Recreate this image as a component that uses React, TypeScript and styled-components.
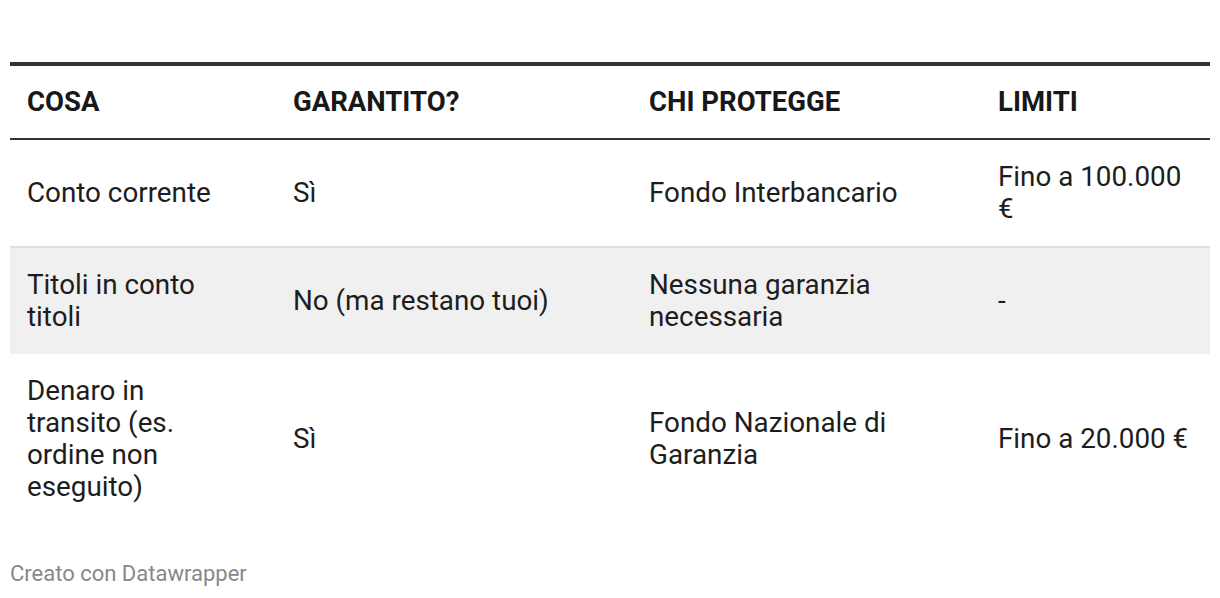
import styled, { createGlobalStyle } from "styled-components";

type Row = {
  cosa: string;
  garantito: string;
  chi: string;
  limiti: string;
};

const columns = ["Cosa", "Garantito?", "Chi protegge", "Limiti"];
const widths = [266, 356, 349, 229];

const rows: Row[] = [
  {
    cosa: "Conto corrente",
    garantito: "Sì",
    chi: "Fondo Interbancario",
    limiti: "Fino a 100.000 €",
  },
  {
    cosa: "Titoli in conto titoli",
    garantito: "No (ma restano tuoi)",
    chi: "Nessuna garanzia necessaria",
    limiti: "-",
  },
  {
    cosa: "Denaro in transito (es. ordine non eseguito)",
    garantito: "Sì",
    chi: "Fondo Nazionale di Garanzia",
    limiti: "Fino a 20.000 €",
  },
];

const GlobalStyle = createGlobalStyle`
  body {
    margin: 0;
    background: #fff;
    font-family: Roboto, "Liberation Sans", sans-serif;
    color: #1d1d1d;
  }
`;

const Page = styled.div`
  padding: 62px 10px 0;
`;

const Table = styled.table`
  width: 1200px;
  border-collapse: collapse;
  table-layout: fixed;
  border-top: 4px solid #333;
`;

const HeadCell = styled.th`
  text-align: left;
  font-weight: 700;
  font-size: 27.5px;
  line-height: 32px;
  text-transform: uppercase;
  color: #181818;
  padding: 20px 17px;
  border-bottom: 2px solid #333;
`;

const BodyRow = styled.tr<{ $striped?: boolean; $divider?: boolean }>`
  background: ${(p) => (p.$striped ? "#f0f0f0" : "#fff")};
  border-bottom: ${(p) => (p.$divider ? "2px solid #dedede" : "none")};
`;

// the first column keeps a narrower text block than its slot
const Cell = styled.td<{ $narrow?: boolean }>`
  font-size: 27.8px;
  line-height: 32px;
  padding: 21px ${(p) => (p.$narrow ? "62px" : "17px")} 21px 17px;
  vertical-align: middle;
  color: #1d1d1d;
`;

const Footer = styled.div`
  margin-top: 36px;
  font-size: 22px;
  line-height: 28px;
  color: #888;
`;

export default function App() {
  return (
    <>
      <GlobalStyle />
      <Page>
        <Table>
          <colgroup>
            {widths.map((w, i) => (
              <col key={i} style={{ width: w }} />
            ))}
          </colgroup>
          <thead>
            <tr>
              {columns.map((c) => (
                <HeadCell key={c}>{c}</HeadCell>
              ))}
            </tr>
          </thead>
          <tbody>
            {rows.map((r, i) => (
              <BodyRow key={r.cosa} $striped={i === 1} $divider={i === 0}>
                <Cell $narrow>{r.cosa}</Cell>
                <Cell>{r.garantito}</Cell>
                <Cell>{r.chi}</Cell>
                <Cell>{r.limiti}</Cell>
              </BodyRow>
            ))}
          </tbody>
        </Table>
        <Footer>Creato con Datawrapper</Footer>
      </Page>
    </>
  );
}
